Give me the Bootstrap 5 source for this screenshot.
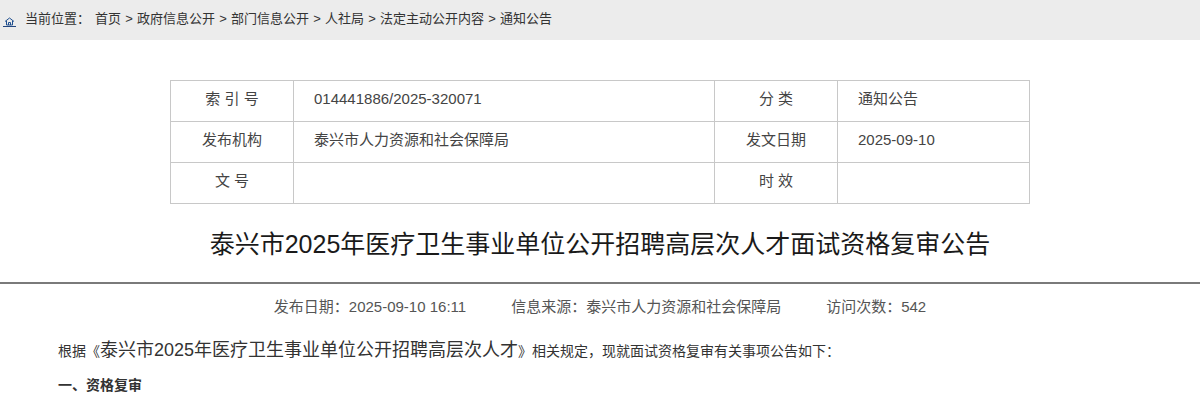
<!DOCTYPE html>
<html lang="zh">
<head>
<meta charset="utf-8">
<title>通知公告</title>
<link rel="stylesheet" href="https://cdn.jsdelivr.net/npm/bootstrap@5.3.0/dist/css/bootstrap.min.css">
<style>
html,body{height:400px;overflow:hidden}
body{font-family:"Liberation Sans","Noto Sans CJK SC",sans-serif;color:#333;background:#fff;font-size:14px}
.crumb-bar{height:40px;background:#ececec;font-size:13px;color:#333;padding-left:3px;padding-bottom:3px}
.crumb-bar svg{margin-right:9px;margin-top:7px;flex:none}
.crumb-bar .lead-label{margin-right:5px}
.crumb-bar .sep{margin:0 4.2px}
.meta-table{width:860px;margin:40px auto 0;table-layout:fixed;border-collapse:collapse;font-size:15px;color:#444}
.meta-table td{height:41px;border:1px solid #c8c8c8;padding:0 20px 3px;vertical-align:middle}
.meta-table td.head-cell{text-align:center;padding:0 0 3px}
.page-title{font-size:25px;font-weight:400;color:#1a1a1a;text-align:center;margin:24px 0 0;line-height:32px}
.title-rule{height:2px;background:#7a7a7a;margin-top:22px}
.info-row{font-size:15px;color:#555;line-height:20px;margin-top:13px;gap:45px}
.doc-body{padding:0 58px;margin-top:21px;color:#333}
.doc-body p{margin:0;line-height:24px;font-size:14px}
.doc-body .big-text{font-size:18px}
.doc-body .sect{font-weight:700;margin-top:10px}
</style>
</head>
<body>
<div class="crumb-bar d-flex align-items-center">
<svg width="13" height="10" viewBox="0 0 13 10" fill="none" stroke="#1f4f8f" stroke-width="1"><path d="M2 4.500 6.500 1 11 4.500M3.500 4v4h6V4M5.500 8V5.500h2V8"/><path d="M0 9.500h13" stroke="#24477f"/></svg>
<span class="lead-label">当前位置：</span>
<span>首页</span><span class="sep">&gt;</span><span>政府信息公开</span><span class="sep">&gt;</span><span>部门信息公开</span><span class="sep">&gt;</span><span>人社局</span><span class="sep">&gt;</span><span>法定主动公开内容</span><span class="sep">&gt;</span><span>通知公告</span>
</div>
<table class="meta-table">
<colgroup><col style="width:123px"><col style="width:421px"><col style="width:123px"><col></colgroup>
<tr><td class="head-cell">索 引 号</td><td>014441886/2025-320071</td><td class="head-cell">分 类</td><td>通知公告</td></tr>
<tr><td class="head-cell">发布机构</td><td>泰兴市人力资源和社会保障局</td><td class="head-cell">发文日期</td><td>2025-09-10</td></tr>
<tr><td class="head-cell">文 号</td><td></td><td class="head-cell">时 效</td><td></td></tr>
</table>
<h1 class="page-title">泰兴市2025年医疗卫生事业单位公开招聘高层次人才面试资格复审公告</h1>
<div class="title-rule"></div>
<div class="info-row d-flex justify-content-center">
<span>发布日期：2025-09-10 16:11</span><span>信息来源：泰兴市人力资源和社会保障局</span><span>访问次数：542</span>
</div>
<div class="doc-body">
<p>根据《<span class="big-text">泰兴市2025年医疗卫生事业单位公开招聘高层次人才</span>》相关规定，现就面试资格复审有关事项公告如下：</p>
<p class="sect">一、资格复审</p>
</div>
<script src="https://cdn.jsdelivr.net/npm/bootstrap@5.3.0/dist/js/bootstrap.bundle.min.js"></script>
</body>
</html>
